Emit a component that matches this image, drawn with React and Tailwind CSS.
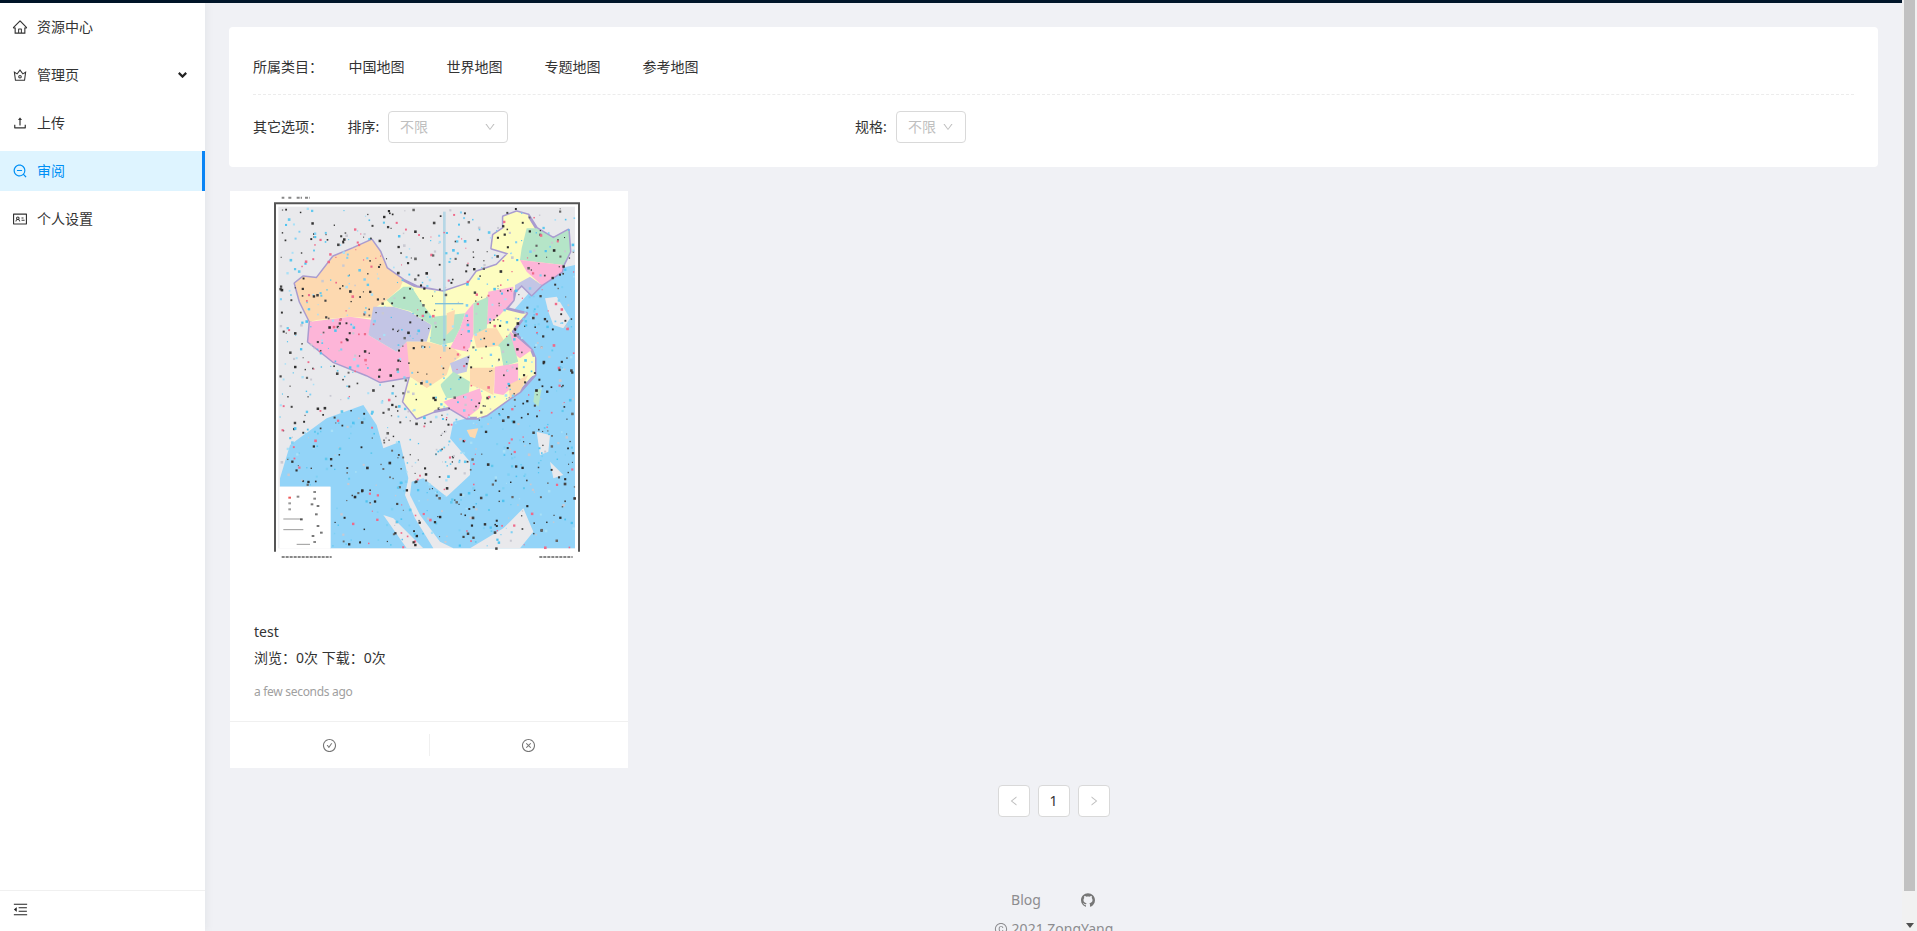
import React from "react";
import {
  AiOutlineHome, AiOutlineCrown, AiOutlineUpload, AiOutlineZoomOut, AiOutlineIdcard,
  AiOutlineMenuFold, AiOutlineCheckCircle, AiOutlineCloseCircle, AiOutlineDown,
  AiOutlineLeft, AiOutlineRight, AiFillGithub, AiOutlineCopyright,
} from "react-icons/ai";

const outline = "225,295 250,275 290,280 340,215 400,190 455,165 480,200 500,250 550,285 590,305 670,320 745,295 770,260 830,240 865,205 815,190 820,150 850,130 850,95 890,80 925,90 950,130 1000,160 1045,135 1050,200 1030,240 1025,260 965,300 935,330 905,300 885,320 880,345 860,370 920,385 880,440 935,495 945,520 945,570 900,620 870,640 800,690 770,700 740,700 690,670 640,680 590,700 550,650 570,575 480,590 440,570 340,530 265,470 270,410 240,350";

const regions = [
  ["#fdd9b0", "225,295 250,275 290,280 340,215 400,190 455,165 480,200 500,250 550,285 540,310 500,345 470,365 460,400 390,395 290,405 270,410 240,350"],
  ["#fdb5d8", "270,410 390,395 460,405 445,450 530,500 560,470 580,520 570,575 480,590 440,570 340,530 265,470"],
  ["#c3c5e5", "460,365 520,365 570,380 635,420 620,470 560,470 530,500 445,450"],
  ["#b5e5c8", "500,345 550,305 575,305 610,360 640,400 700,470 660,480 630,470 635,420 570,378 520,365"],
  ["#fdfdc0", "575,305 670,320 745,295 770,260 830,240 865,205 815,190 820,150 850,130 850,95 890,80 925,90 920,130 905,190 890,240 930,260 880,300 810,330 760,350 700,370 640,395 610,360"],
  ["#b5e5c8", "920,130 950,130 1000,160 1045,135 1050,200 1030,240 900,225 905,190"],
  ["#fdb5d8", "900,225 1030,240 1025,260 965,300 920,260"],
  ["#c3c5e5", "885,300 930,275 965,300 935,330 905,300 885,320"],
  ["#fdb5d8", "805,320 880,305 880,345 840,390 800,420"],
  ["#b5e5c8", "760,355 805,335 800,440 760,450"],
  ["#fdb5d8", "735,385 760,355 760,450 745,500 690,490 720,430"],
  ["#b5e5c8", "640,395 735,385 720,430 690,490 700,470 660,480"],
  ["#fdd9b0", "680,385 705,375 700,430 680,450"],
  ["#fdfdc0", "840,395 920,385 870,440 830,430"],
  ["#fdd9b0", "760,450 800,430 830,430 860,480 770,490"],
  ["#fdb5d8", "870,440 935,495 900,520 860,490"],
  ["#b5e5c8", "835,480 870,445 895,530 850,545"],
  ["#fdfdc0", "745,490 840,485 850,545 755,545"],
  ["#fdd9b0", "560,470 620,470 700,490 725,510 690,540 680,570 620,610 570,575"],
  ["#c3c5e5", "690,535 750,510 740,560 700,570"],
  ["#b5e5c8", "660,600 700,560 750,590 745,635 680,640"],
  ["#fdfdc0", "570,575 620,610 660,590 670,640 640,680 590,700 550,650"],
  ["#fdb5d8", "670,650 780,610 790,660 740,700 690,670"],
  ["#fdd9b0", "750,548 825,548 820,630 780,610 750,600"],
  ["#fdb5d8", "825,545 895,535 895,590 850,630 822,625"],
  ["#fdfdc0", "895,520 945,515 945,570 895,590"],
  ["#fdd9b0", "865,600 925,570 900,620 870,640"],
  ["#fdfdc0", "785,640 860,640 870,640 800,690 770,700"],
  ["#fdd9b0", "740,735 775,730 765,760 750,755"],
  ["#b5e5c8", "945,615 965,610 955,665 940,650"],
];

const gray = [
  "975,340 1010,335 1050,400 1030,430 1000,420 985,380",
  "950,740 990,750 985,800 960,810",
  "990,830 1030,870 1000,880",
  "490,990 520,1000 610,1090 560,1090",
  "750,1090 850,1030 910,970 940,1040 900,1090",
];

let seed = 17;
const rnd = () => {
  seed = (seed * 16807) % 2147483647;
  return seed / 2147483647;
};
const palette = ["#333333", "#666666", "#4fc3f0", "#7fd0f4", "#2b2b2b", "#a9e0f7", "#60c8ee", "#444444", "#c9c9d2", "#ef6a8a"];
const dots = Array.from({ length: 1300 }, () => ({
  x: 178 + rnd() * 885,
  y: 68 + rnd() * 1020,
  w: 3 + rnd() * 5,
  c: palette[Math.floor(rnd() * palette.length)],
})).filter((d) => !(d.x < 335 && d.y > 900));

const legend = [
  [205, 935, "#ef5a5a"], [205, 952, "#999999"], [205, 970, "#999999"], [230, 932, "#888888"],
  [280, 918, "#888888"], [280, 938, "#888888"], [272, 955, "#777777"], [290, 960, "#777777"],
  [285, 985, "#777777"], [240, 1000, "#555555"], [290, 1020, "#777777"], [275, 1050, "#777777"],
  [300, 1040, "#777777"], [280, 1068, "#888888"],
];

function MapPicture() {
  return (
    <svg width="398" height="400" viewBox="30 18 1194 1200" className="block blur-[0.7px]">
      <rect x="30" y="18" width="1194" height="1200" fill="#ffffff" />
      <rect x="175" y="65" width="890" height="1025" fill="#e9e9ec" />
      <polygon fill="#93d4f8" points="1065,240 1020,250 930,320 860,400 880,620 780,690 700,710 690,760 750,830 750,870 680,935 610,880 575,890 570,930 600,990 660,1070 700,1090 1065,1090" />
      <polygon fill="#93d4f8" points="180,880 210,780 320,700 430,660 470,720 490,790 540,770 565,880 555,930 585,1000 640,1090 330,1090 330,905 180,905" />
      {gray.map((pts, i) => (
        <polygon key={i} fill="#e9e9ec" points={pts} />
      ))}
      <polygon fill="#fdfdc0" stroke="#a99cd0" strokeWidth="9" strokeLinejoin="round" points={outline} />
      {regions.map(([fill, pts], i) => (
        <polygon key={i} fill={fill} points={pts} />
      ))}
      <rect x="669" y="80" width="8" height="420" fill="#9fcfe4" opacity="0.7" />
      <rect x="645" y="354" width="85" height="4" fill="#7fc0d8" />
      {dots.map((d, i) => (
        <rect key={i} x={d.x} y={d.y} width={d.w} height={d.w} fill={d.c} />
      ))}
      <rect x="178" y="905" width="154" height="185" fill="#ffffff" />
      {legend.map(([x, y, c], i) => (
        <rect key={i} x={x} y={y} width="8" height="6" fill={c} />
      ))}
      <path d="M190 1002h50M190 1034h60M230 1078h40" stroke="#999999" strokeWidth="3" />
      <path d="M165 1100V55H1077V1100" fill="none" stroke="#555555" strokeWidth="6" />
      <path d="M185 38h8M205 38h12M230 38h16M255 38h14M185 1116h150M958 1116h100" stroke="#888888" strokeWidth="6" strokeDasharray="9 3" fill="none" />
    </svg>
  );
}

const menu = [
  { label: "资源中心", Icon: AiOutlineHome },
  { label: "管理页", Icon: AiOutlineCrown, arrow: true },
  { label: "上传", Icon: AiOutlineUpload },
  { label: "审阅", Icon: AiOutlineZoomOut, active: true },
  { label: "个人设置", Icon: AiOutlineIdcard },
];

function Select({ width }) {
  return (
    <div className={`flex h-8 items-center justify-between rounded-sm border border-[#d9d9d9] bg-white px-[11px] text-[#bfbfbf] ${width}`}>
      <span>不限</span>
      <AiOutlineDown size={12} />
    </div>
  );
}

export default function App() {
  return (
    <div
      className="flex h-[931px] overflow-hidden bg-[#f0f1f5] text-sm text-[#333333]"
      style={{ fontFamily: '"Noto Sans", "Noto Sans CJK SC", sans-serif' }}
    >
      <div className="flex min-w-0 flex-1 flex-col">
        <div className="h-[3px] bg-[#001529]" />
        <div className="flex min-h-0 flex-1">
          <aside className="relative z-10 flex w-[205px] shrink-0 flex-col bg-white shadow-[2px_0_8px_0_rgba(29,35,41,0.05)]">
            <nav className="flex-1 pt-1">
              {menu.map(({ label, Icon, arrow, active }) => (
                <div
                  key={label}
                  className={`mb-2 flex h-10 items-center gap-[9px] pl-[12px] pr-[18px] ${
                    active ? "border-r-[3px] border-[#0a84f5] bg-[#def4ff] text-[#0090f5]" : "text-[#333333]"
                  }`}
                >
                  <Icon size={16} />
                  <span className="flex-1">{label}</span>
                  {arrow && (
                    <svg width="9" height="6" viewBox="0 0 9 6" fill="none" stroke="#222222" strokeWidth="2.2">
                      <path d="M0.8 0.9L4.5 4.6L8.2 0.9" />
                    </svg>
                  )}
                </div>
              ))}
            </nav>
            <div className="flex h-[41px] items-center border-t border-[#f0f0f0] pb-1 pl-[12px] text-[#222222]">
              <AiOutlineMenuFold size={17} />
            </div>
          </aside>
          <main className="min-w-0 flex-1 px-6 pt-6">
            <section className="rounded-sm bg-white px-6 pb-6 pt-[25px]">
              <div className="flex h-[43px] items-start border-b border-dashed border-[#ececec]">
                <div className="flex h-[29px] items-center">
                  <span className="w-[95.5px] whitespace-nowrap">所属类目：</span>
                  <div className="flex gap-[42px]">
                    <span>中国地图</span>
                    <span>世界地图</span>
                    <span>专题地图</span>
                    <span>参考地图</span>
                  </div>
                </div>
              </div>
              <div className="mt-4 flex h-8 items-center">
                <span className="w-[94.5px] whitespace-nowrap">其它选项：</span>
                <div className="flex w-[507.5px] items-center">
                  <span className="w-[40.5px] whitespace-nowrap">排序:</span>
                  <Select width="w-[120px]" />
                </div>
                <div className="flex items-center">
                  <span className="w-[41px] whitespace-nowrap">规格:</span>
                  <Select width="w-[70px]" />
                </div>
              </div>
            </section>

            <article className="ml-px mt-6 w-[398px] bg-white">
              <MapPicture />
              <div className="px-6 pb-[19px] pt-[30px]">
                <div className="leading-[22px]">test</div>
                <div className="mt-1 leading-[22px]">浏览：0次 下载：0次</div>
                <div className="mt-[13px] text-xs leading-5 tracking-[-0.3px] text-[#a0a0a0]">a few seconds ago</div>
              </div>
              <div className="flex h-[47px] items-center border-t border-[#f0f0f0] text-[#777777]">
                <div className="flex h-[22px] flex-1 items-center justify-center border-r border-[#f0f0f0]">
                  <AiOutlineCheckCircle size={15} />
                </div>
                <div className="flex flex-1 items-center justify-center">
                  <AiOutlineCloseCircle size={15} />
                </div>
              </div>
            </article>

            <div className="mt-[17px] flex justify-center gap-2">
              <div className="flex size-8 items-center justify-center rounded-sm border border-[#d9d9d9] bg-white text-[#bfbfbf]">
                <AiOutlineLeft size={12} />
              </div>
              <div className="flex size-8 items-center justify-center rounded-sm border border-[#d9d9d9] bg-white">1</div>
              <div className="flex size-8 items-center justify-center rounded-sm border border-[#d9d9d9] bg-white text-[#bfbfbf]">
                <AiOutlineRight size={12} />
              </div>
            </div>

            <footer className="mt-[72px] text-center leading-[22px] text-[#8c8c8f]">
              <div className="flex items-center justify-center gap-[39px]">
                <span>Blog</span>
                <AiFillGithub size={16} className="text-[#777777]" />
              </div>
              <div className="mt-[7px] flex items-center justify-center gap-1">
                <AiOutlineCopyright size={14} />
                <span>2021 ZongYang</span>
              </div>
            </footer>
          </main>
        </div>
      </div>
      <div className="flex w-[15px] shrink-0 flex-col bg-[#f1f1f1] px-[2px] pb-[3px]">
        <div className="h-[891px] w-[11px] bg-[#c1c1c1]" />
        <div className="flex flex-1 items-end justify-center">
          <svg width="8" height="5" viewBox="0 0 8 5" fill="#505050">
            <path d="M0 0H8L4 5Z" />
          </svg>
        </div>
      </div>
    </div>
  );
}
